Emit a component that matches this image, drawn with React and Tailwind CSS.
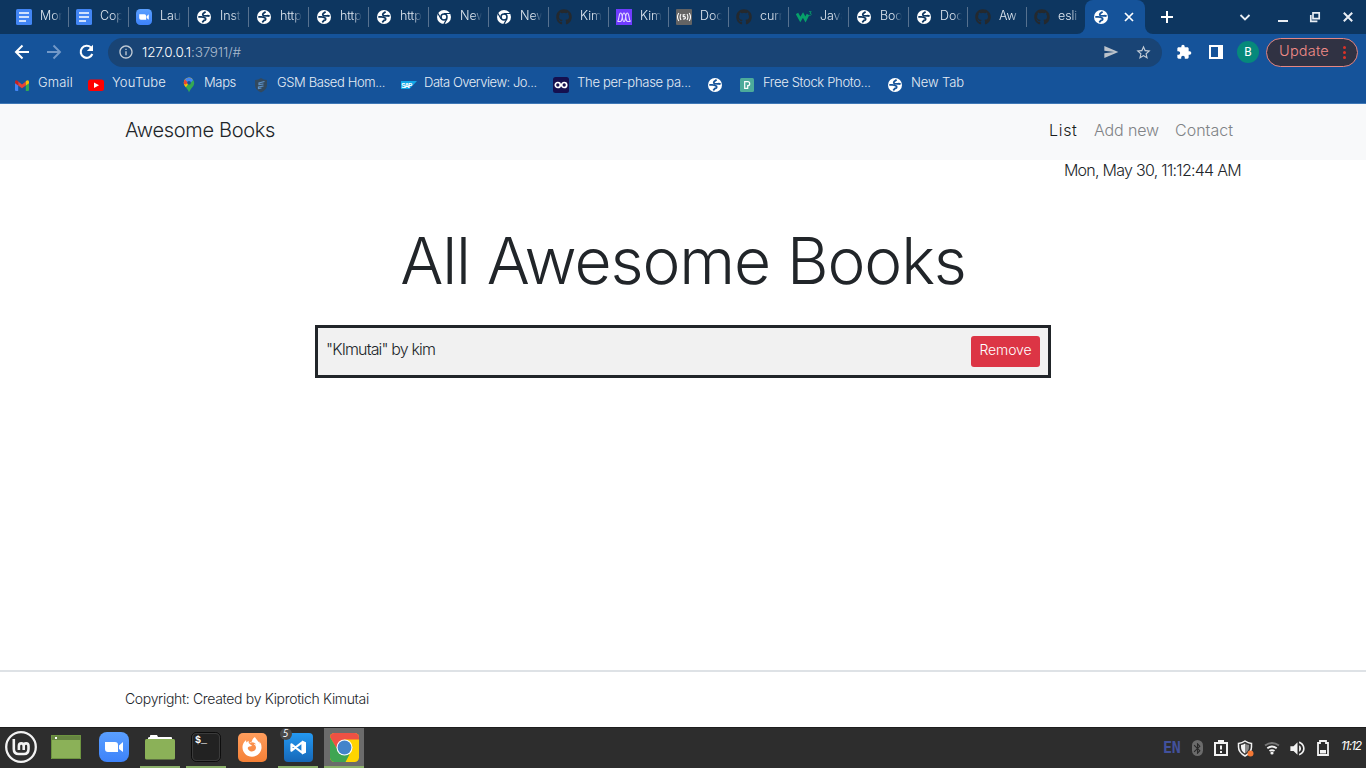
import React from "react";
import {
  MdInfoOutline, MdSend, MdStarBorder,
  MdExtension, MdVolumeUp, MdBluetooth,
} from "react-icons/md";
import { FaGithub, FaFirefoxBrowser } from "react-icons/fa";

const Globe = ({ land = "#15539a" }) => (
  <svg className="size-[14px] shrink-0" viewBox="0 0 14 14">
    <circle cx="7" cy="7" r="7" fill="#fff" />
    <path d="M8.6 1.7L6.2 3.400Q5 5.400 7 5.700L9.800 5.900Q11.300 5.500 12.600 6.200M1.300 6.800L4.200 6.900Q6.600 7 8.500 8.300 9.200 10 7 10.400L5.300 12.300" fill="none" stroke={land} strokeWidth="1.800" strokeLinejoin="round" />
  </svg>
);
const TabGlobe = () => <Globe land="#0d3660" />;

const Docs = () => (
  <svg className="size-4 shrink-0" viewBox="0 0 16 16">
    <rect width="16" height="16" rx="1.5" fill="#4285f4" />
    <path d="M3 4h10M3 8h10M3 12h7" stroke="#fff" strokeWidth="1.7" />
  </svg>
);

const Zoom = ({ className = "size-4" }) => (
  <svg className={`${className} shrink-0`} viewBox="0 0 30 30">
    <defs>
      <linearGradient id="zoomBlue" x2="0" y2="1">
        <stop stopColor="#5a9fff" />
        <stop offset="1" stopColor="#3d82fa" />
      </linearGradient>
    </defs>
    <rect width="30" height="30" rx="8" fill="url(#zoomBlue)" />
    <path d="M6 10h10q3 0 3 3v7H9q-3 0-3-3zM20 13.5l4-3.5v10l-4-3z" fill="#fff" />
  </svg>
);

const ChromeMono = () => (
  <svg className="size-4 shrink-0" viewBox="0 0 16 16">
    <circle cx="8" cy="8" r="7" fill="#fff" />
    <circle cx="8" cy="8" r="3" fill="#fff" stroke="#0d3660" strokeWidth="1.5" />
    <path d="M8 4.5h6.4M5 9.7L1.8 4.3M11 9.7l-3.1 5.4" stroke="#0d3660" strokeWidth="1.2" />
  </svg>
);

const GitHub = () => <FaGithub className="size-4 shrink-0 text-[#24292e]" />;

const Microverse = () => (
  <svg className="size-4 shrink-0" viewBox="0 0 16 16">
    <rect width="16" height="16" fill="#6f3cff" />
    <path
      d="M1.5 12.500C3.500 11 2.500 4 4.700 4S5.800 12.500 8 12.500 9 4 11.300 4 12.500 11 14.500 12.500M4.500 12.500C7 12 5.500 4 8 4s1 8 3.500 8.500M1.500 12.500h3M11.500 12.500h3"
      fill="none" stroke="#e3d8ff" strokeWidth="1.100"
    />
  </svg>
);

const Broadcast = () => (
  <svg className="size-4 shrink-0" viewBox="0 0 16 16">
    <rect width="16" height="16" rx="1" fill="#646464" />
    <path
      d="M2.8 4q-2.600 4 0 8M5 5q-1.800 3 0 6M13.2 4q2.600 4 0 8M11 5q1.800 3 0 6M9.3 5.8H7.2v1.9q2.2-.4 2.2 1.1T7 10"
      fill="none" stroke="#fff" strokeWidth="1.100"
    />
  </svg>
);

const W3 = () => (
  <svg className="size-4 shrink-0" viewBox="0 0 16 16">
    <path d="M1 4.500L4.300 10.500 7 6l2.500 4.500 2.500-5" fill="none" stroke="#07a06a" strokeWidth="2.800" />
    <path d="M13 2.6h2.2L14 4.3q1.6 0 1.2 1.3t-2.2.7" fill="none" stroke="#07a06a" strokeWidth=".8" />
  </svg>
);

const TABS = [
  [Docs, "Mor"], [Docs, "Cop"], [Zoom, "Lau"], [TabGlobe, "Inst"], [TabGlobe, "http"], [TabGlobe, "http"],
  [TabGlobe, "http"], [ChromeMono, "New"], [ChromeMono, "New"], [GitHub, "Kim"], [Microverse, "Kim"],
  [Broadcast, "Doc"], [GitHub, "curr"], [W3, "Java"], [TabGlobe, "Boo"], [TabGlobe, "Doc"],
  [GitHub, "Aw"], [GitHub, "esli"],
];

function TabStrip() {
  return (
    <div className="flex h-[34px] bg-[#0d3660] pl-[9px]">
      {TABS.map(([Icon, label], i) => (
        <div
          key={i}
          className={`flex h-[34px] shrink-0 items-center pl-[7px] ${i > 14 ? "w-[59px]" : "w-[60px]"}`}
        >
          <span className="flex w-4 shrink-0 justify-center"><Icon /></span>
          <span className="mb-[3px] ml-2 w-[22px] overflow-hidden whitespace-nowrap text-[12.5px] leading-5 tracking-[-.1px] text-[#dfe7f0] [mask-image:linear-gradient(to_right,black_60%,transparent)]">
            {label}
          </span>
          <span className={`ml-auto h-5 w-px ${i === 17 ? "bg-transparent" : "bg-[#56718f]"}`} />
        </div>
      ))}
      <div className="flex h-[34px] items-end">
        <div className="-ml-[9px] size-2 bg-[#15539a]"><div className="size-2 rounded-br-lg bg-[#0d3660]" /></div>
        <div className="flex h-[34px] w-[60px] items-center justify-between rounded-t-lg bg-[#15539a] pl-[9px] pr-[10px]">
          <Globe />
          <svg width="12" height="12" viewBox="0 0 12 12" stroke="#fff" strokeWidth="1.700"><path d="M2 2l8 8M10 2l-8 8" /></svg>
        </div>
        <div className="size-2 bg-[#15539a]"><div className="size-2 rounded-bl-lg bg-[#0d3660]" /></div>
      </div>
      <svg className="ml-2 mt-[11px] shrink-0" width="12" height="12" viewBox="0 0 12 12" stroke="#fff" strokeWidth="2"><path d="M0 6h12M6 0v12" /></svg>
      <div className="ml-auto flex items-center pr-3 text-[#e9eef4]">
        <svg width="12" height="12" viewBox="0 0 12 12" fill="none" stroke="currentColor" strokeWidth="1.8"><path d="M1.5 4L6 8.5 10.5 4" /></svg>
        <svg className="ml-[26px]" width="12" height="12" viewBox="0 0 12 12"><path d="M1 9h10v2H1z" fill="currentColor" /></svg>
        <svg className="ml-5" width="12" height="12" viewBox="0 0 12 12" fill="none" stroke="currentColor" strokeWidth="1.7"><path d="M4 1.8h6.2v5.8H4zM1.8 4v6.3h6.6" /></svg>
        <svg className="ml-[21px]" width="12" height="12" viewBox="0 0 12 12" stroke="currentColor" strokeWidth="2"><path d="M1.8 1.8l8.4 8.4M10.2 1.8l-8.4 8.4" /></svg>
      </div>
    </div>
  );
}

function Toolbar() {
  return (
    <div className="flex h-9 items-center pl-[13px] pr-2">
      <svg className="shrink-0" width="18" height="18" viewBox="0 0 18 18" fill="none" stroke="#fff" strokeWidth="2"><path d="M16 9H3.500M9.500 2.500L3 9l6.500 6.500" /></svg>
      <svg className="ml-[14px] shrink-0" width="18" height="18" viewBox="0 0 18 18" fill="none" stroke="#7399c8" strokeWidth="1.900"><path d="M2 9h12.500M8.500 2.500L15 9l-6.500 6.500" /></svg>
      <svg className="ml-[14px] shrink-0" width="19" height="18" viewBox="0 0 19 18">
        <path d="M14 4.600A6 6 0 1 0 15.300 11" fill="none" stroke="#fff" strokeWidth="2.100" /><path d="M16 1.800V8H9.800z" fill="#fff" />
      </svg>
      <div className="ml-3 flex h-[29px] w-[1054px] shrink-0 items-center rounded-full bg-[#194475] pl-[10px] pr-[10px]">
        <MdInfoOutline className="size-4 text-[#c3ccd6]" />
        <span className="ml-2 text-[13.5px] tracking-[-0.15px] text-white">127.0.0.1</span>
        <span className="text-[13.5px] tracking-[-0.18px] text-[#a9bacd]">:37911/#</span>
        <MdSend className="ml-auto size-4 text-[#bcc3cb]" />
        <MdStarBorder className="ml-4 size-[17px] text-[#c3ccd6]" />
      </div>
      <MdExtension className="ml-[14px] size-4 text-white" />
      <svg className="ml-[17px] shrink-0" width="14" height="14" viewBox="0 0 14 14">
        <path d="M1 1h12v12H1z" fill="none" stroke="#fff" strokeWidth="2" /><path d="M9 0h5v14H9z" fill="#fff" />
      </svg>
      <span className="ml-[14px] flex size-[22px] shrink-0 items-center justify-center rounded-full bg-[#06897b] font-['Roboto'] text-xs font-normal text-white">B</span>
      <div className="ml-[7px] flex h-[29px] w-[92px] shrink-0 items-center rounded-full border border-[#e58683] bg-[#303243] pl-3">
        <span className="mb-[3px] text-[14.5px] leading-5 tracking-[.21px] text-[#f08c88]">Update</span>
        <span className="ml-[14px] flex flex-col gap-0.5">
          <i className="size-[3px] rounded-full bg-[#dc3228]" />
          <i className="size-[3px] rounded-full bg-[#dc3228]" />
          <i className="size-[3px] rounded-full bg-[#dc3228]" />
        </span>
      </div>
    </div>
  );
}

const Gmail = () => (
  <svg className="size-4" viewBox="0 0 16 16">
    <path d="M1 4.5h3.2V14H2q-1 0-1-1z" fill="#4285f4" />
    <path d="M11.8 4.5H15V13q0 1-1 1h-2.2z" fill="#34a853" />
    <path d="M4.2 4.5L8 7.5l3.8-3v4L8 11.3 4.2 8.5z" fill="#ea4335" />
    <path d="M1 5q0-3 3.2-1v4.5L1 6.2z" fill="#c5221f" />
    <path d="M15 5q0-3-3.2-1v4.5L15 6.2z" fill="#fbbc04" />
  </svg>
);
const YouTube = () => (
  <svg className="size-4" viewBox="0 0 16 16">
    <rect y="2.5" width="16" height="11.5" rx="2.5" fill="#f00" /><path d="M6 5.5l5 2.8-5 2.8z" fill="#fff" />
  </svg>
);
const MapPin = () => (
  <svg className="size-4" viewBox="0 0 16 16">
    <path d="M2.8 6A5.2 5.2 0 0 1 13.2 6C13.2 10 9.5 11 8 15.5 7 11.5 2.8 9.5 2.8 6z" fill="#34a853" />
    <path d="M2.8 6q0 2.2 2 4.2L11.5 2A5.2 5.2 0 0 0 2.8 6z" fill="#fbbc04" />
    <path d="M2.8 6q0-2 1.2-3.4L7 5 5 7.5 3 7z" fill="#ea4335" />
    <path d="M4 2.5Q8-1.5 12.2 3L9.5 6 6.5 5z" fill="#4285f4" />
    <circle cx="8" cy="5.8" r="1.9" fill="#15539a" />
  </svg>
);
const Shield = () => (
  <svg className="size-4" viewBox="0 0 16 16">
    <path d="M2 3q3 .2 6-2 3 2.200 6 2v5q0 5-6 7.500Q2 13 2 8z" fill="#32495e" />
    <path d="M11.500 4.500L6 6v1.500l4.500-.5M10.500 9L5.500 10v1.500l3-.5" fill="none" stroke="#5f93c8" strokeWidth="1.200" />
  </svg>
);
const Sap = () => (
  <svg className="size-4" viewBox="0 0 16 16">
    <path d="M0 4h16l-7.500 8H0z" fill="#12a8e8" />
    <text x=".3" y="10.600" fontSize="6.500" fontWeight="700" fontFamily="Liberation Sans" fill="#fff" textLength="11">SAP</text>
  </svg>
);
const Loop = () => (
  <svg className="size-4" viewBox="0 0 16 16">
    <rect width="16" height="16" rx="2.500" fill="#15104f" />
    <g fill="none" stroke="#fff" strokeWidth="1.700"><circle cx="4.800" cy="8" r="2.500" /><circle cx="11.200" cy="8" r="2.500" /></g>
  </svg>
);
const Pexels = () => (
  <svg className="size-[14px]" viewBox="0 0 14 14">
    <rect width="14" height="14" rx="1.500" fill="#4cab9b" />
    <path d="M4.700 3.700h3q2 0 2 2t-2 2v2.600h-3z" fill="none" stroke="#fff" strokeWidth="1.200" />
  </svg>
);

const Bookmark = ({ icon: Icon, gap, children }) => (
  <div className={`flex items-center whitespace-nowrap ${gap}`}>
    <span className="flex w-4 shrink-0 justify-center"><Icon /></span>
    {children}
  </div>
);

function Bookmarks() {
  return (
    <div className="flex h-[33px] items-center pb-[4px] text-[13px] text-[#e6edf5] [&_div>span:last-child]:mb-[3px]">
      <Bookmark icon={Gmail} gap="w-[74px] ml-[14px]"><span className="ml-2 tracking-[.15px]">Gmail</span></Bookmark>
      <Bookmark icon={YouTube} gap="w-[93px]"><span className="ml-2 tracking-[.19px]">YouTube</span></Bookmark>
      <Bookmark icon={MapPin} gap="w-[72px]"><span className="ml-[7px] tracking-[-.35px]">Maps</span></Bookmark>
      <Bookmark icon={Shield} gap="w-[148px]"><span className="ml-2 tracking-[-.39px]">GSM Based Hom...</span></Bookmark>
      <Bookmark icon={Sap} gap="w-[152px]"><span className="ml-[7px] tracking-[-.47px]">Data Overview: Jo...</span></Bookmark>
      <Bookmark icon={Loop} gap="w-[154px]"><span className="ml-2 tracking-[-.27px]">The per-phase pa...</span></Bookmark>
      <span className="w-8 pl-px"><Globe /></span>
      <Bookmark icon={Pexels} gap="w-[148px]"><span className="ml-2 tracking-[-.33px]">Free Stock Photo...</span></Bookmark>
      <Bookmark icon={Globe} gap="w-[90px]"><span className="ml-2 tracking-[-.1px]">New Tab</span></Bookmark>
    </div>
  );
}

function Page() {
  return (
    <div className="flex h-[623px] flex-col bg-white text-[#212529]">
      <nav className="flex h-14 items-center justify-between bg-[#f8f9fa] pb-1 pl-[125px] pr-[133px]">
        <span className="text-xl tracking-[-.31px]">Awesome Books</span>
        <div className="flex gap-4 text-base text-[#808386]">
          <span className="w-[29px] tracking-[.7px] text-[#1a1d20]">List</span>
          <span className="w-[65px] whitespace-nowrap tracking-[-.13px]">Add new</span>
          <span className="w-[58px]">Contact</span>
        </div>
      </nav>
      <time className="self-end whitespace-nowrap pr-[125px] text-base leading-[21px] tracking-[-.72px]">Mon, May 30, 11:12:44 AM</time>
      <main className="flex flex-col items-center pt-[41px]">
        <h1 className="h-[103px] whitespace-nowrap text-[64px] leading-[77px] tracking-[-1.08px]">All Awesome Books</h1>
        <div className="flex h-[53px] w-[736px] items-start justify-between border-[3px] border-[#212529] bg-[#f1f1f1] p-2">
          <span className="text-base leading-[26px] tracking-[-.86px]">"KImutai" by kim</span>
          <button className="h-[31px] w-[69px] rounded-[3px] bg-[#dc3545] pb-[3px] text-sm tracking-[-.11px] text-white">Remove</button>
        </div>
      </main>
      <footer className="mt-auto h-[57px] border-t-2 border-[#dee2e6] pl-[125px] pt-[17px] text-sm tracking-[-.33px]">
        Copyright: Created by Kiprotich Kimutai
      </footer>
    </div>
  );
}

const Mint = () => (
  <svg width="32" height="32" viewBox="0 0 32 32" fill="none" stroke="#f2f2f2">
    <circle cx="16" cy="16" r="14.800" strokeWidth="2.300" />
    <path d="M8.800 8v10q0 5 5 5h5.200q4.500 0 4.500-5v-3q0-2.600-2.400-2.600T18.700 15v4M18.700 15q0-2.600-2.400-2.600T13.900 15v4" strokeWidth="2.600" />
  </svg>
);
const Desktop = () => (
  <svg width="30" height="24" viewBox="0 0 30 24">
    <path d="M0 0h30v24H0z" fill="#8bb158" /><path d="M0 0h30v5H0z" fill="#668541" /><path d="M4 2h2v2H4z" fill="#fff" />
    <path d="M.5.500h29v23H.5z" fill="none" stroke="#6d9440" />
  </svg>
);
const Folder = () => (
  <svg width="30" height="26" viewBox="0 0 30 26">
    <path d="M3 6V4q0-1 2-1V1.500Q5 1 6 1h6l1 2h13q1 0 1 1v2z" fill="#fff" />
    <rect y="5" width="30" height="20.500" rx="1.500" fill="#8bb158" />
  </svg>
);
const Terminal = () => (
  <svg width="30" height="30" viewBox="0 0 30 30">
    <rect x=".500" y=".500" width="29" height="29" rx="5" fill="#222" stroke="#0d0d0d" />
    <path d="M5 1.500h20q3.500 0 3.500 3.500v20q0 3.500-3.500 3.500H5q-3.500 0-3.500-3.500V5q0-3.500 3.500-3.500z" fill="none" stroke="#3b3b3b" />
    <text x="4" y="11" fontFamily="Liberation Mono" fontWeight="700" fontSize="10" fill="#fff">$_</text>
  </svg>
);
const Firefox = () => (
  <span className="flex size-[29px] items-center justify-center rounded-[5px] bg-linear-to-b from-[#ff9d5c] to-[#f58035]">
    <FaFirefoxBrowser className="size-5 text-white" />
  </span>
);
const Code = () => (
  <span className="relative flex">
    <svg width="29" height="29" viewBox="0 0 29 29">
      <defs><linearGradient id="codeBlue" x2="0" y2="1"><stop stopColor="#2499f2" /><stop offset="1" stopColor="#1667b7" /></linearGradient></defs>
      <rect width="29" height="29" rx="4" fill="url(#codeBlue)" />
      <path d="M7.500 11.300L18.500 20V9L7.500 17.700z" fill="none" stroke="#fff" strokeWidth="2.200" strokeLinejoin="round" />
      <path d="M18 7.500l4 1.800v10.400l-4 1.800z" fill="#fff" />
    </svg>
    <span className="absolute -left-1 -top-[5px] flex size-3 items-center justify-center rounded-full bg-[#4a4a4a] font-['Open_Sans'] text-[10px] font-normal italic text-white">5</span>
  </span>
);
const Chrome = () => (
  <svg width="29" height="29" viewBox="0 0 29 29">
    <defs><clipPath id="tile"><rect width="29" height="29" rx="4.500" /></clipPath></defs>
    <g clipPath="url(#tile)">
      <path d="M0 0h29v29H0z" fill="#ffd400" />
      <path d="M0 0h29v6.500H14.500L8 18 0 4z" fill="#ef5144" />
      <path d="M0 4l8.500 14.500 11 3L15.500 29H0z" fill="#3fa552" />
    </g>
    <circle cx="14.500" cy="14.500" r="8" fill="#fff" /><circle cx="14.500" cy="14.500" r="6.900" fill="#4384cb" />
  </svg>
);

const LAUNCHERS = [
  [Mint, "ml-px"], [Desktop, "ml-[5px]"], [Zoom, "ml-2"], [Folder, "ml-[6px]"],
  [Terminal, "ml-[6px]"], [Firefox, "ml-[6px]"], [Code, "ml-[6px]"], [Chrome, "ml-[6px]"],
];

function Taskbar() {
  return (
    <div className="flex h-[41px] border-t border-[#1e1e1e] bg-[#2d2d2d]">
      {LAUNCHERS.map(([Icon, margin], i) => (
        <div key={i} className={`flex h-10 w-10 shrink-0 items-center justify-center border-b-2 ${margin} ${[3, 4, 6, 7].includes(i) ? "border-[#8bb06a]" : "border-transparent"} ${i === 7 ? "bg-[#6b6b6b]" : ""}`}>
          {i === 2 ? <Zoom className="size-[30px]" /> : <Icon />}
        </div>
      ))}
      <div className="ml-auto flex items-center pr-[5px] text-[#f2f2f2]">
        <span className="w-[18px] font-['DejaVu_Sans_Mono'] text-[15px] font-bold tracking-[-.3px] text-[#42519c]">EN</span>
        <span className="ml-[11px] flex h-4 w-[11px] items-center justify-center rounded-full bg-[#6b6b6b] text-[#292929]"><MdBluetooth className="size-[13px] shrink-0" /></span>
        <svg className="ml-[11px]" width="14" height="16" viewBox="0 0 14 16">
          <path d="M1 3h12v12H1z" fill="none" stroke="currentColor" strokeWidth="2" /><path d="M4 0h6v3H4zM6 5.500h2v4H6zM6 11h2v2H6z" fill="currentColor" />
        </svg>
        <svg className="ml-[9px]" width="17" height="17" viewBox="0 0 17 17">
          <path d="M1.500 3.500Q5 3 8 1q3 2 6.500 2.500V7q0 5.500-6.500 9-6.500-3.500-6.500-9z" fill="#333" stroke="currentColor" strokeWidth="1.500" />
          <path d="M8 3.500v10Q4 11 4 7V5q2.500-.2 4-1.500z" fill="currentColor" /><path d="M8 3.500v10Q12 11 12 7V5q-2.500-.2-4-1.500z" fill="#888" />
          <circle cx="13.500" cy="13.500" r="3" fill="#f47835" />
        </svg>
        <svg className="ml-[10px]" width="16" height="14" viewBox="0 0 16 14" fill="none" strokeWidth="1.900">
          <path d="M1 4.500q7-5 14 0" stroke="#777" /><path d="M3.300 7.300q4.700-3.500 9.400 0M5.500 10q2.500-1.800 5 0" stroke="currentColor" /><circle cx="8" cy="12" r="1.600" fill="currentColor" />
        </svg>
        <MdVolumeUp className="ml-[8px] size-[19px]" />
        <svg className="ml-[10px]" width="12" height="16" viewBox="0 0 12 16">
          <path d="M3 3V1h6v2h2v12H1V3z" fill="none" stroke="currentColor" strokeWidth="1.800" /><path d="M3 10h6v3.500H3z" fill="currentColor" />
        </svg>
        <span className="mb-[5px] ml-[12px] whitespace-nowrap text-xs font-normal italic tracking-[-1.1px] text-white">11:12</span>
      </div>
    </div>
  );
}

export default function App() {
  return (
    <div className="flex h-[768px] w-[1366px] flex-col overflow-hidden font-['Inter',sans-serif] font-light">
      <header className="h-[104px] border-b border-[#3f78b6] bg-[#15539a]">
        <TabStrip />
        <Toolbar />
        <Bookmarks />
      </header>
      <Page />
      <Taskbar />
    </div>
  );
}
